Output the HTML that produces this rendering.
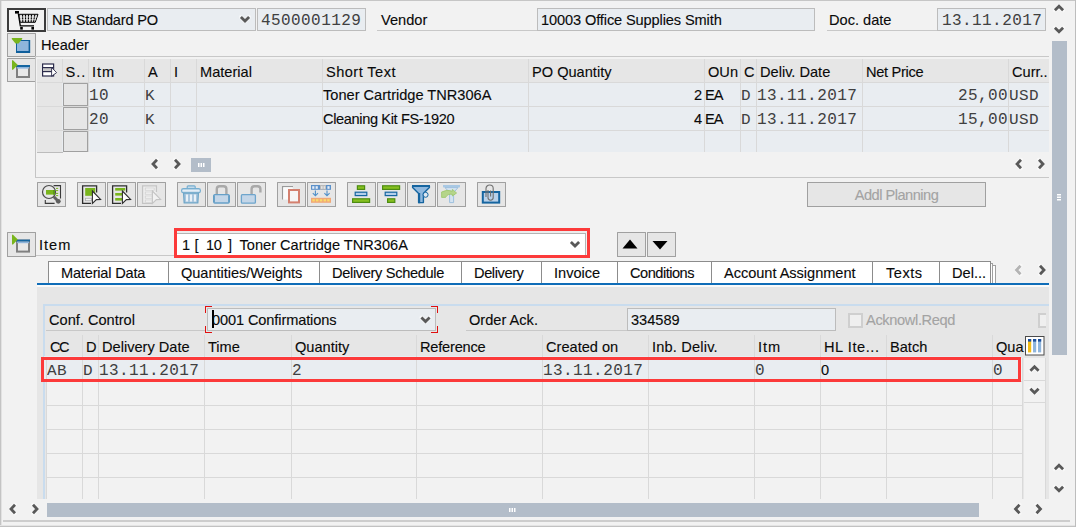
<!DOCTYPE html>
<html><head><meta charset="utf-8">
<style>
*{box-sizing:border-box;margin:0;padding:0}
html,body{width:1076px;height:527px;overflow:hidden;background:#f2f2f2}
body{position:relative;font-family:"Liberation Sans",sans-serif;font-size:14.6px;color:#0a0a0a}
.a{position:absolute}
.t{position:absolute;white-space:nowrap;line-height:18px;height:18px;-webkit-text-stroke:0.12px currentColor}
.m{font-family:"Liberation Mono",monospace;font-size:16px;letter-spacing:0.42px;color:#404040;margin-top:1px;-webkit-text-stroke:0}
.f{position:absolute;background:#e9edf1;border:1px solid #bcbcbc}
.btn{position:absolute;background:#e6e6e6;border:1px solid #a0a0a0;border-radius:0.5px}
.hl{position:absolute;height:1px;background:#d9d9d9}
.vl{position:absolute;width:1px;background:#d9d9d9}
.tb{top:182px;width:29px;height:25px}
.tv{top:262px;height:21px;background:#8c8c8c}
.c{text-align:center}
.lr{left:46px;width:977px}
.lc{top:335px;height:164px}
.ml{transform-origin:0 13.6px;transform:scaleY(0.87)}
svg{position:absolute;overflow:visible}
</style></head><body>

<!-- window edges -->
<div class="a" style="left:0;top:0;width:1076px;height:1px;background:#c6c6c6"></div>
<div class="a" style="left:0;top:0;width:1px;height:527px;background:#c4c4c4"></div><div class="a" style="left:1px;top:1px;width:1px;height:526px;background:#e2e2e2"></div>

<!-- ===== top row ===== -->
<div class="a" id="cart" style="left:7px;top:8px;width:39px;height:24px;border:2px solid #3c3c3c;background:#f2f2f2"></div>
<div class="f" style="left:47px;top:8px;width:209px;height:23px"></div>
<div class="t" style="left:52px;top:11px;letter-spacing:-0.2px">NB Standard PO</div>
<div class="f" style="left:257px;top:8px;width:109px;height:23px"></div>
<div class="t m" style="left:261px;top:11px">4500001129</div>
<div class="t" style="left:381px;top:11px">Vendor</div>
<div class="hl" style="left:377px;top:30px;width:160px;background:#c8c8c8"></div>
<div class="f" style="left:537px;top:8px;width:278px;height:23px"></div>
<div class="t" style="left:541px;top:11px;letter-spacing:-0.12px">10003 Office Supplies Smith</div>
<div class="t" style="left:829px;top:11px">Doc. date</div>
<div class="hl" style="left:827px;top:30px;width:110px;background:#c8c8c8"></div>
<div class="f" style="left:937px;top:8px;width:109px;height:23px"></div>
<div class="t m" style="left:942px;top:11px">13.11.2017</div>

<!-- header row -->
<div class="btn" style="left:7px;top:33px;width:29px;height:24px"></div>
<div class="t" style="left:41px;top:36px">Header</div>
<div class="hl" style="left:35px;top:56px;width:1014px;background:#c8c8c8"></div>

<!-- ===== item overview ===== -->
<div class="btn" style="left:7px;top:58px;width:29px;height:24px"></div>
<div class="vl" style="left:35px;top:56px;height:122px;background:#c4c4c4"></div>
<div class="hl" style="left:35px;top:177px;width:1014px;background:#c8c8c8"></div>

<div class="a" style="left:37px;top:59px;width:1012px;height:93px;background:#e9edf1"></div>
<div class="a" style="left:37px;top:59px;width:1012px;height:23px;background:#e6e6e6"></div>
<div class="a" style="left:37px;top:82px;width:25px;height:70px;background:#e6e6e6"></div>
<!-- row lines -->
<div class="hl" style="left:37px;top:82px;width:1012px"></div>
<div class="hl" style="left:37px;top:106px;width:1012px"></div>
<div class="hl" style="left:37px;top:130px;width:1012px"></div>
<!-- column lines -->
<div class="vl" style="left:62px;top:59px;height:23px"></div>
<div class="vl" style="left:88px;top:59px;height:93px"></div>
<div class="vl" style="left:144px;top:59px;height:93px"></div>
<div class="vl" style="left:170px;top:59px;height:93px"></div>
<div class="vl" style="left:196px;top:59px;height:93px"></div>
<div class="vl" style="left:322px;top:59px;height:93px"></div>
<div class="vl" style="left:528px;top:59px;height:93px"></div>
<div class="vl" style="left:704px;top:59px;height:93px"></div>
<div class="vl" style="left:740px;top:59px;height:93px"></div>
<div class="vl" style="left:756px;top:59px;height:93px"></div>
<div class="vl" style="left:862px;top:59px;height:93px"></div>
<div class="vl" style="left:1008px;top:59px;height:93px"></div>
<!-- row selectors -->
<div class="btn" style="left:63px;top:83px;width:25px;height:23px"></div>
<div class="btn" style="left:63px;top:107px;width:25px;height:23px"></div>
<div class="btn" style="left:63px;top:131px;width:25px;height:21px"></div>
<div class="hl" style="left:37px;top:152px;width:26px;background:#bcbcbc"></div>
<!-- headers -->
<div class="t" style="left:65.5px;top:63px;letter-spacing:1px">S..</div>
<div class="t" style="left:92px;top:63px;letter-spacing:1px">Itm</div>
<div class="t" style="left:148px;top:63px">A</div>
<div class="t" style="left:174px;top:63px">I</div>
<div class="t" style="left:200px;top:63px">Material</div>
<div class="t" style="left:326px;top:63px;letter-spacing:0.45px">Short Text</div>
<div class="t" style="left:532px;top:63px">PO Quantity</div>
<div class="t" style="left:708px;top:63px">OUn</div>
<div class="t" style="left:744px;top:63px">C</div>
<div class="t" style="left:760px;top:63px">Deliv. Date</div>
<div class="t" style="left:866px;top:63px;letter-spacing:-0.3px">Net Price</div>
<div class="t" style="left:1012px;top:63px">Curr..</div>
<!-- row 1 -->
<div class="t m" style="left:89px;top:86px">10</div>
<div class="t m ml" style="left:145px;top:86px">K</div>
<div class="t" style="left:323px;top:86px">Toner Cartridge TNR306A</div>
<div class="t" style="left:600px;top:86px;width:102px;text-align:right">2</div>
<div class="t" style="left:705px;top:86px;letter-spacing:-1px">EA</div>
<div class="t m ml" style="left:741px;top:86px">D</div>
<div class="t m" style="left:757px;top:86px">13.11.2017</div>
<div class="t m" style="left:900px;top:86px;width:108px;text-align:right">25,00</div>
<div class="t m ml" style="left:1009px;top:86px">USD</div>
<!-- row 2 -->
<div class="t m" style="left:89px;top:110px">20</div>
<div class="t m ml" style="left:145px;top:110px">K</div>
<div class="t" style="left:323px;top:110px;letter-spacing:-0.37px">Cleaning Kit FS-1920</div>
<div class="t" style="left:600px;top:110px;width:102px;text-align:right">4</div>
<div class="t" style="left:705px;top:110px;letter-spacing:-1px">EA</div>
<div class="t m ml" style="left:741px;top:110px">D</div>
<div class="t m" style="left:757px;top:110px">13.11.2017</div>
<div class="t m" style="left:900px;top:110px;width:108px;text-align:right">15,00</div>
<div class="t m ml" style="left:1009px;top:110px">USD</div>
<!-- tbl1 scroll -->
<div class="a" style="left:191px;top:158px;width:20px;height:14px;background:#b3bdc9"></div>

<!-- ===== toolbar ===== -->
<div class="btn tb" style="left:37px"></div>
<div class="btn tb" style="left:77px"></div>
<div class="btn tb" style="left:107px"></div>
<div class="btn tb" style="left:137px"></div>
<div class="btn tb" style="left:177px"></div>
<div class="btn tb" style="left:207px"></div>
<div class="btn tb" style="left:237px"></div>
<div class="btn tb" style="left:277px"></div>
<div class="btn tb" style="left:307px"></div>
<div class="btn tb" style="left:347px"></div>
<div class="btn tb" style="left:377px"></div>
<div class="btn tb" style="left:407px"></div>
<div class="btn tb" style="left:437px"></div>
<div class="btn tb" style="left:477px"></div>
<div class="btn" style="left:807px;top:182px;width:179px;height:25px"></div>
<div class="t" style="left:807px;top:186px;width:179px;text-align:center;color:#a3a3a3;letter-spacing:-0.5px">Addl Planning</div>

<!-- ===== item detail ===== -->
<div class="btn" style="left:7px;top:232px;width:29px;height:25px"></div>
<div class="t" style="left:39px;top:236px;letter-spacing:1px">Item</div>
<div class="hl" style="left:36px;top:255px;width:139px;background:#c8c8c8"></div>
<div class="a" style="left:175px;top:233px;width:411px;height:24px;background:#fff;border:1px solid #b4b4b4"></div><div class="a" style="left:177px;top:231px;width:410px;height:2px;background:#ececec"></div>
<div class="a" style="left:174px;top:228px;width:416px;height:30px;border:3px solid #fc3a3a"></div>
<div class="t" style="left:182px;top:236px">1</div>
<div class="t" style="left:194.6px;top:236px">[</div>
<div class="t" style="left:206px;top:236px;letter-spacing:-0.3px">10</div>
<div class="t" style="left:228px;top:236px">]</div>
<div class="t" style="left:239.5px;top:236px">Toner Cartridge TNR306A</div>
<div class="btn" style="left:617px;top:232px;width:29px;height:25px"></div>
<div class="btn" style="left:647px;top:232px;width:29px;height:25px"></div>

<!-- tabs -->
<div class="a" style="left:37px;top:285px;width:1012px;height:214px;background:#e6e6e6"></div>
<div class="a" style="left:37px;top:283px;width:1012px;height:2px;background:#0f6db8"></div>
<div class="a" style="left:37px;top:285px;width:1012px;height:2px;background:#fafafa"></div>
<div class="a" id="tabs" style="left:48px;top:261px;width:943px;height:22px;background:#fff;border:1px solid #8c8c8c;border-bottom:none"></div>
<div class="a" style="left:991px;top:263px;width:2px;height:20px;background:#fff;border:1px solid #a0a0a0;border-left:none;border-bottom:none"></div>
<div class="a" style="left:993px;top:265px;width:3px;height:18px;background:#fff;border:1px solid #a0a0a0;border-left:none;border-bottom:none"></div>
<div class="vl tv" style="left:168px"></div>
<div class="vl tv" style="left:319px"></div>
<div class="vl tv" style="left:461px"></div>
<div class="vl tv" style="left:541px"></div>
<div class="vl tv" style="left:617px"></div>
<div class="vl tv" style="left:711px"></div>
<div class="vl tv" style="left:872px"></div>
<div class="vl tv" style="left:939px"></div>
<div class="t" style="left:61px;top:264px;letter-spacing:-0.2px">Material Data</div>
<div class="t" style="left:181px;top:264px;letter-spacing:-0.05px">Quantities/Weights</div>
<div class="t" style="left:332px;top:264px;letter-spacing:-0.33px">Delivery Schedule</div>
<div class="t" style="left:474px;top:264px;letter-spacing:-0.4px">Delivery</div>
<div class="t" style="left:554px;top:264px">Invoice</div>
<div class="t" style="left:630px;top:264px;letter-spacing:-0.5px">Conditions</div>
<div class="t" style="left:724px;top:264px;letter-spacing:-0.04px">Account Assignment</div>
<div class="t" style="left:886px;top:264px;letter-spacing:0.5px">Texts</div>
<div class="t" style="left:952px;top:264px">Del...</div>

<!-- group box -->
<div class="a" style="left:43px;top:304px;width:1006px;height:195px;border-left:2px solid #c9dcee;border-top:2px solid #c9dcee"></div>
<div class="t" style="left:49px;top:311px">Conf. Control</div>
<div class="hl" style="left:46px;top:330px;width:160px;background:#c8c8c8"></div>
<div class="f" style="left:207px;top:308px;width:229px;height:23px"></div>
<div class="a" style="left:205px;top:306px;width:7px;height:7px;border-left:1.5px solid #e01010;border-top:1.5px solid #e01010"></div>
<div class="a" style="left:205px;top:326px;width:7px;height:7px;border-left:1.5px solid #e01010;border-bottom:1.5px solid #e01010"></div>
<div class="a" style="left:431px;top:306px;width:7px;height:7px;border-right:1.5px solid #e01010;border-top:1.5px solid #e01010"></div>
<div class="a" style="left:431px;top:326px;width:7px;height:7px;border-right:1.5px solid #e01010;border-bottom:1.5px solid #e01010"></div>
<div class="a" style="left:212px;top:310px;width:2px;height:18px;background:#000"></div>
<div class="t" style="left:212px;top:311px;letter-spacing:-0.12px">0001 Confirmations</div>
<div class="t" style="left:469px;top:311px">Order Ack.</div>
<div class="hl" style="left:466px;top:330px;width:161px;background:#c8c8c8"></div>
<div class="f" style="left:627px;top:308px;width:209px;height:23px"></div>
<div class="t" style="left:631px;top:311px">334589</div>
<div class="a" style="left:848px;top:313px;width:15px;height:15px;border:2px solid #cfcfcf;background:#efefef"></div>
<div class="t" style="left:866px;top:311px;color:#a3a3a3;letter-spacing:-0.35px">Acknowl.Reqd</div>
<div class="a" style="left:1038px;top:313px;width:8px;height:15px;border:2px solid #cfcfcf;border-right:none;background:#efefef"></div>

<!-- lower table -->
<div class="a" style="left:46px;top:358px;width:977px;height:141px;background:#f2f2f2"></div>
<div class="a" style="left:1024px;top:358px;width:21px;height:141px;background:#f2f2f2"></div>
<div class="a" style="left:44px;top:356px;width:977px;height:25px;background:#e9edf1"></div>
<div class="hl lr" style="top:381px"></div>
<div class="hl lr" style="top:405px"></div>
<div class="hl lr" style="top:429px"></div>
<div class="hl lr" style="top:453px"></div>
<div class="hl lr" style="top:477px"></div>
<div class="vl lc" style="left:46px;top:358px;height:141px"></div>
<div class="vl lc" style="left:82px"></div>
<div class="vl lc" style="left:98px"></div>
<div class="vl lc" style="left:204px"></div>
<div class="vl lc" style="left:291px"></div>
<div class="vl lc" style="left:416px"></div>
<div class="vl lc" style="left:542px"></div>
<div class="vl lc" style="left:648px"></div>
<div class="vl lc" style="left:754px"></div>
<div class="vl lc" style="left:820px"></div>
<div class="vl lc" style="left:886px"></div>
<div class="vl lc" style="left:992px"></div>
<div class="vl lc" style="left:1022px;top:358px;height:141px"></div>
<div class="t" style="left:50px;top:338px;letter-spacing:-1.5px">CC</div>
<div class="t" style="left:86px;top:338px">D</div>
<div class="t" style="left:102px;top:338px">Delivery Date</div>
<div class="t" style="left:208px;top:338px">Time</div>
<div class="t" style="left:295px;top:338px">Quantity</div>
<div class="t" style="left:420px;top:338px;letter-spacing:-0.2px">Reference</div>
<div class="t" style="left:546px;top:338px">Created on</div>
<div class="t" style="left:652px;top:338px;letter-spacing:0.18px">Inb. Deliv.</div>
<div class="t" style="left:758px;top:338px;letter-spacing:1px">Itm</div>
<div class="t" style="left:824px;top:338px;letter-spacing:0.55px">HL Ite...</div>
<div class="t" style="left:890px;top:338px">Batch</div>
<div class="t" style="left:996px;top:338px">Qua</div>
<div class="t m ml" style="left:47px;top:361px">AB</div>
<div class="t m ml" style="left:83px;top:361px">D</div>
<div class="t m" style="left:99px;top:361px">13.11.2017</div>
<div class="t m" style="left:292px;top:361px">2</div>
<div class="t m" style="left:543px;top:361px">13.11.2017</div>
<div class="t m" style="left:755px;top:361px">0</div>
<div class="t" style="left:821px;top:361px">0</div>
<div class="t m" style="left:993px;top:361px">0</div>
<div class="a" style="left:41px;top:357px;width:980px;height:25px;border:3px solid #fc3a3a"></div>
<!-- col config icon -->
<!-- inner v scroll -->
<div class="hl" style="left:1024px;top:380px;width:21px"></div>
<div class="hl" style="left:1024px;top:402px;width:21px"></div>
<div class="vl" style="left:1045px;top:358px;height:141px"></div>

<!-- bottom scrollbar -->
<div class="a" style="left:47px;top:503px;width:932px;height:14px;background:#b3bdc9"></div>
<div class="a" style="left:3px;top:520px;width:1067px;height:2px;background:#cdcdcd"></div>
<div class="a" style="left:0;top:525px;width:1076px;height:1px;background:#e4e4e4"></div><div class="a" style="left:0;top:526px;width:1076px;height:1px;background:#c2c2c2"></div>

<!-- right scrollbar -->
<div class="a" style="left:1052px;top:41px;width:15px;height:314px;background:#b3bdc9"></div>
<div class="a" style="left:1075px;top:0;width:1px;height:527px;background:#bdbdbd"></div>

<!-- chevrons -->
<svg class="a" style="left:0;top:0" width="1076" height="527" viewBox="0 0 1076 527">
<path d="M240.9,17.0 L245.0,21.0 L249.1,17.0" fill="none" stroke="#fff" stroke-opacity="0.45" stroke-width="4.2" stroke-linejoin="round" stroke-linecap="round"/>
<path d="M240.9,17.0 L245.0,21.0 L249.1,17.0" fill="none" stroke="#595959" stroke-width="2.8" stroke-linejoin="miter" stroke-miterlimit="2"/>
<path d="M570.9,242.0 L575.0,246.0 L579.1,242.0" fill="none" stroke="#fff" stroke-opacity="0.45" stroke-width="4.2" stroke-linejoin="round" stroke-linecap="round"/>
<path d="M570.9,242.0 L575.0,246.0 L579.1,242.0" fill="none" stroke="#595959" stroke-width="2.8" stroke-linejoin="miter" stroke-miterlimit="2"/>
<path d="M421.4,317.5 L425.5,321.5 L429.6,317.5" fill="none" stroke="#fff" stroke-opacity="0.45" stroke-width="4.2" stroke-linejoin="round" stroke-linecap="round"/>
<path d="M421.4,317.5 L425.5,321.5 L429.6,317.5" fill="none" stroke="#595959" stroke-width="2.8" stroke-linejoin="miter" stroke-miterlimit="2"/>
<path d="M1054.9,10.2 L1059.0,6.199999999999999 L1063.1,10.2" fill="none" stroke="#fff" stroke-opacity="0.45" stroke-width="4.2" stroke-linejoin="round" stroke-linecap="round"/>
<path d="M1054.9,10.2 L1059.0,6.199999999999999 L1063.1,10.2" fill="none" stroke="#595959" stroke-width="2.8" stroke-linejoin="miter" stroke-miterlimit="2"/>
<path d="M1054.9,27.8 L1059.0,31.8 L1063.1,27.8" fill="none" stroke="#fff" stroke-opacity="0.45" stroke-width="4.2" stroke-linejoin="round" stroke-linecap="round"/>
<path d="M1054.9,27.8 L1059.0,31.8 L1063.1,27.8" fill="none" stroke="#595959" stroke-width="2.8" stroke-linejoin="miter" stroke-miterlimit="2"/>
<path d="M1054.9,469.2 L1059.0,465.2 L1063.1,469.2" fill="none" stroke="#fff" stroke-opacity="0.45" stroke-width="4.2" stroke-linejoin="round" stroke-linecap="round"/>
<path d="M1054.9,469.2 L1059.0,465.2 L1063.1,469.2" fill="none" stroke="#595959" stroke-width="2.8" stroke-linejoin="miter" stroke-miterlimit="2"/>
<path d="M1054.9,486.8 L1059.0,490.8 L1063.1,486.8" fill="none" stroke="#fff" stroke-opacity="0.45" stroke-width="4.2" stroke-linejoin="round" stroke-linecap="round"/>
<path d="M1054.9,486.8 L1059.0,490.8 L1063.1,486.8" fill="none" stroke="#595959" stroke-width="2.8" stroke-linejoin="miter" stroke-miterlimit="2"/>
<path d="M157.0,159.8 L153.0,164.0 L157.0,168.2" fill="none" stroke="#fff" stroke-opacity="0.45" stroke-width="4.2" stroke-linejoin="round" stroke-linecap="round"/>
<path d="M157.0,159.8 L153.0,164.0 L157.0,168.2" fill="none" stroke="#595959" stroke-width="2.8" stroke-linejoin="miter" stroke-miterlimit="2"/>
<path d="M175.0,159.8 L179.0,164.0 L175.0,168.2" fill="none" stroke="#fff" stroke-opacity="0.45" stroke-width="4.2" stroke-linejoin="round" stroke-linecap="round"/>
<path d="M175.0,159.8 L179.0,164.0 L175.0,168.2" fill="none" stroke="#595959" stroke-width="2.8" stroke-linejoin="miter" stroke-miterlimit="2"/>
<path d="M1021.0,159.8 L1017.0,164.0 L1021.0,168.2" fill="none" stroke="#fff" stroke-opacity="0.45" stroke-width="4.2" stroke-linejoin="round" stroke-linecap="round"/>
<path d="M1021.0,159.8 L1017.0,164.0 L1021.0,168.2" fill="none" stroke="#595959" stroke-width="2.8" stroke-linejoin="miter" stroke-miterlimit="2"/>
<path d="M1039.0,159.8 L1043.0,164.0 L1039.0,168.2" fill="none" stroke="#fff" stroke-opacity="0.45" stroke-width="4.2" stroke-linejoin="round" stroke-linecap="round"/>
<path d="M1039.0,159.8 L1043.0,164.0 L1039.0,168.2" fill="none" stroke="#595959" stroke-width="2.8" stroke-linejoin="miter" stroke-miterlimit="2"/>
<path d="M1020.5,265.8 L1016.5,270.0 L1020.5,274.2" fill="none" stroke="#fff" stroke-opacity="0.45" stroke-width="4.2" stroke-linejoin="round" stroke-linecap="round"/>
<path d="M1020.5,265.8 L1016.5,270.0 L1020.5,274.2" fill="none" stroke="#b4b4b4" stroke-width="2.8" stroke-linejoin="miter" stroke-miterlimit="2"/>
<path d="M1040.0,265.8 L1044.0,270.0 L1040.0,274.2" fill="none" stroke="#fff" stroke-opacity="0.45" stroke-width="4.2" stroke-linejoin="round" stroke-linecap="round"/>
<path d="M1040.0,265.8 L1044.0,270.0 L1040.0,274.2" fill="none" stroke="#595959" stroke-width="2.8" stroke-linejoin="miter" stroke-miterlimit="2"/>
<path d="M1030.4,370.8 L1034.5,366.8 L1038.6,370.8" fill="none" stroke="#fff" stroke-opacity="0.45" stroke-width="4.2" stroke-linejoin="round" stroke-linecap="round"/>
<path d="M1030.4,370.8 L1034.5,366.8 L1038.6,370.8" fill="none" stroke="#595959" stroke-width="2.8" stroke-linejoin="miter" stroke-miterlimit="2"/>
<path d="M1030.4,388.8 L1034.5,392.8 L1038.6,388.8" fill="none" stroke="#fff" stroke-opacity="0.45" stroke-width="4.2" stroke-linejoin="round" stroke-linecap="round"/>
<path d="M1030.4,388.8 L1034.5,392.8 L1038.6,388.8" fill="none" stroke="#595959" stroke-width="2.8" stroke-linejoin="miter" stroke-miterlimit="2"/>
<path d="M15.0,504.8 L11.0,509.0 L15.0,513.2" fill="none" stroke="#fff" stroke-opacity="0.45" stroke-width="4.2" stroke-linejoin="round" stroke-linecap="round"/>
<path d="M15.0,504.8 L11.0,509.0 L15.0,513.2" fill="none" stroke="#595959" stroke-width="2.8" stroke-linejoin="miter" stroke-miterlimit="2"/>
<path d="M33.0,504.8 L37.0,509.0 L33.0,513.2" fill="none" stroke="#fff" stroke-opacity="0.45" stroke-width="4.2" stroke-linejoin="round" stroke-linecap="round"/>
<path d="M33.0,504.8 L37.0,509.0 L33.0,513.2" fill="none" stroke="#595959" stroke-width="2.8" stroke-linejoin="miter" stroke-miterlimit="2"/>
<path d="M1019.5,504.8 L1015.5,509.0 L1019.5,513.2" fill="none" stroke="#fff" stroke-opacity="0.45" stroke-width="4.2" stroke-linejoin="round" stroke-linecap="round"/>
<path d="M1019.5,504.8 L1015.5,509.0 L1019.5,513.2" fill="none" stroke="#595959" stroke-width="2.8" stroke-linejoin="miter" stroke-miterlimit="2"/>
<path d="M1036.5,504.8 L1040.5,509.0 L1036.5,513.2" fill="none" stroke="#fff" stroke-opacity="0.45" stroke-width="4.2" stroke-linejoin="round" stroke-linecap="round"/>
<path d="M1036.5,504.8 L1040.5,509.0 L1036.5,513.2" fill="none" stroke="#595959" stroke-width="2.8" stroke-linejoin="miter" stroke-miterlimit="2"/>
<path d="M622.5,248.5 L630,239.5 L637.5,248.5 Z" fill="#000"/>
<path d="M652.5,241 L667.5,241 L660,249.5 Z" fill="#000"/>
<g fill="#fff"><rect x="198" y="163" width="1.5" height="4"/><rect x="200.5" y="163" width="1.5" height="4"/><rect x="203" y="163" width="1.5" height="4"/></g>
<g fill="#fff"><rect x="509" y="508" width="1.5" height="4"/><rect x="511.5" y="508" width="1.5" height="4"/><rect x="514" y="508" width="1.5" height="4"/></g>
<g fill="#fff"><rect x="1057" y="194" width="4" height="1.5"/><rect x="1057" y="196.5" width="4" height="1.5"/><rect x="1057" y="199" width="4" height="1.5"/></g>
</svg>
<!-- icons -->
<svg class="a" style="left:0;top:0" width="1076" height="527" viewBox="0 0 1076 527">
<!-- cart -->
<g id="cart-ic">
<rect x="15" y="11" width="4" height="2.6" fill="#000"/>
<path d="M18.3,13.5 L20.3,25.8 L34,25.8" fill="none" stroke="#000" stroke-width="1.3"/>
<path d="M19,14.3 L38,14.3 L35.2,22.3 L20.2,22.3 Z" fill="#d8d8d8" stroke="#000" stroke-width="1"/>
<g stroke="#000" stroke-width="1.1">
<line x1="22.5" y1="14.5" x2="22.8" y2="22"/><line x1="25.5" y1="14.5" x2="25.6" y2="22"/><line x1="28.5" y1="14.5" x2="28.4" y2="22"/><line x1="31.5" y1="14.5" x2="31.2" y2="22"/><line x1="34.8" y1="14.5" x2="33.6" y2="22"/>
</g>
<g stroke="#fff" stroke-width="0.8" opacity="0.75"><line x1="19.5" y1="17" x2="37" y2="17"/><line x1="20" y1="19.7" x2="36" y2="19.7"/></g>
<rect x="20.2" y="27" width="2.6" height="2.6" fill="#000"/>
<rect x="31.4" y="27" width="2.6" height="2.6" fill="#000"/>
</g>
<!-- header collapse icon -->
<g>
<rect x="16.5" y="40.5" width="13" height="12" fill="#8fb5dc" stroke="#0f5f9c" stroke-width="1"/>
<rect x="16" y="51" width="14" height="2" fill="#0f5f9c"/>
<rect x="28.6" y="40" width="1.6" height="13" fill="#0f5f9c"/>
<path d="M11.8,38 L22.2,38 L22.2,39 L18.5,43.6 L15.5,43.6 L11.8,39 Z" fill="#79b51c"/>
</g>
<!-- item overview expand icon -->
<g>
<rect x="17" y="66" width="12" height="11" fill="#e8e8e8" stroke="#808080" stroke-width="2"/>
<rect x="16" y="65" width="14" height="2" fill="#1565a0"/>
<rect x="17" y="67" width="12" height="1.6" fill="#8fb5dc"/>
<path d="M12,60.2 L13,60.2 L17.8,65 L13,69.8 L12,69.8 Z" fill="#79b51c"/>
</g>
<!-- item detail expand icon -->
<g transform="translate(0,174.6)">
<rect x="17" y="66" width="12" height="11" fill="#e8e8e8" stroke="#808080" stroke-width="2"/>
<rect x="16" y="65" width="14" height="2" fill="#1565a0"/>
<rect x="17" y="67" width="12" height="1.6" fill="#8fb5dc"/>
<path d="M12,60.2 L13,60.2 L17.8,65 L13,69.8 L12,69.8 Z" fill="#79b51c"/>
</g>
<!-- table config icon -->
<g>
<rect x="42.6" y="64" width="11" height="12" fill="#fff" stroke="#2b2b4b" stroke-width="1.2"/>
<rect x="43.2" y="68" width="10" height="3" fill="#c8c8c8"/>
<line x1="42.6" y1="67.6" x2="53.6" y2="67.6" stroke="#2b2b4b" stroke-width="1.2"/>
<line x1="42.6" y1="71.6" x2="53.6" y2="71.6" stroke="#2b2b4b" stroke-width="1.2"/>
<path d="M51.6,67.5 L51.6,76.3 L56.6,72.6 Z" fill="#fff" stroke="#2b2b4b" stroke-width="0.9"/>
</g>

<!-- tb1: detail / magnifier -->
<g>
<path d="M53.6,185.6 L60.5,185.6 L60.5,198.4 M54.6,203.4 L45.3,203.4 L45.3,200" fill="none" stroke="#3a3a3a" stroke-width="1.1"/>
<circle cx="49" cy="192" r="6.5" fill="#e8e8e8" stroke="#4a4a4a" stroke-width="1.2"/>
<rect x="46" y="190" width="9" height="4.6" fill="#79b51c"/>
<rect x="53" y="190" width="2" height="4.6" fill="#5e9a18"/>
<g stroke="#79b51c" stroke-width="1"><line x1="56" y1="188.4" x2="58.2" y2="188.4"/><line x1="56" y1="190.6" x2="58.2" y2="190.6"/><line x1="56" y1="193.4" x2="58.2" y2="193.4"/><line x1="56" y1="195.6" x2="58.2" y2="195.6"/></g>
<line x1="53.8" y1="196.8" x2="58" y2="201" stroke="#606060" stroke-width="3"/>
<circle cx="58.3" cy="201.3" r="2.4" fill="#606060"/>
</g>
<!-- tb2 -->
<g id="pg2">
<path d="M96.6,192.6 L96.6,185.8 L82.6,185.8 L82.6,203.4 L91,203.4" fill="none" stroke="#2e2e2e" stroke-width="1.3"/>
<rect x="85.2" y="188" width="10" height="7.8" fill="#79b51c"/>
<rect x="85.5" y="198.3" width="6" height="2.4" fill="#f4f4f4" stroke="#b0b0b0" stroke-width="0.8"/>
<path d="M92.4,191 L100.6,199.4 L96.4,199.6 L92.4,203.4 Z" fill="#fff" stroke="#2e2e2e" stroke-width="1.1" stroke-linejoin="miter"/>
</g>
<!-- tb3 -->
<g>
<path d="M126.6,192.6 L126.6,185.8 L112.6,185.8 L112.6,203.4 L121,203.4" fill="none" stroke="#2e2e2e" stroke-width="1.3"/>
<rect x="115.2" y="188" width="10" height="2.6" fill="#79b51c"/>
<rect x="115.2" y="193" width="7" height="2.6" fill="#79b51c"/>
<rect x="115.2" y="198" width="7" height="2.6" fill="#79b51c"/>
<path d="M122.4,191 L130.6,199.4 L126.4,199.6 L122.4,203.4 Z" fill="#fff" stroke="#2e2e2e" stroke-width="1.1" stroke-linejoin="miter"/>
</g>
<!-- tb4 disabled -->
<g>
<path d="M156.4,192 L156.4,185.8 L142.6,185.8 L142.6,203.4 L152,203.4" fill="#f0f0f0" stroke="#c4c4c4" stroke-width="1.3"/>
<g fill="#f4f4f4" stroke="#cfcfcf" stroke-width="0.8"><rect x="145.2" y="188" width="9" height="2.2"/><rect x="145.2" y="192" width="7" height="2.2"/><rect x="145.2" y="196" width="7" height="2.2"/><rect x="145.2" y="200" width="7" height="2.2"/></g>
<path d="M152.4,191 L160.6,199.4 L156.4,199.6 L152.4,203.4 Z" fill="#f2f2f2" stroke="#c4c4c4" stroke-width="1.1"/>
</g>
<!-- tb5 trash -->
<g>
<rect x="187.2" y="185.8" width="8" height="3" rx="1" fill="#c4daea" stroke="#76aed0" stroke-width="1.2"/>
<rect x="181.6" y="188.6" width="18.8" height="4.2" rx="1.8" fill="#c9dcec" stroke="#76aed0" stroke-width="1.2"/>
<line x1="182.6" y1="190.7" x2="199.4" y2="190.7" stroke="#eef4f9" stroke-width="0.9"/>
<path d="M183.6,193.2 L198.4,193.2 L197.8,202.8 L184.2,202.8 Z" fill="#a9c6de" stroke="#6ea6c8" stroke-width="1.3"/>
<g stroke="#fff" stroke-width="1.5"><line x1="187" y1="194.4" x2="187" y2="201.4"/><line x1="191" y1="194.4" x2="191" y2="201.4"/><line x1="195" y1="194.4" x2="195" y2="201.4"/></g>
</g>
<!-- tb6 lock -->
<g>
<path d="M216.8,194 L216.8,189 Q216.8,186.2 219.6,186.2 L223.6,186.2 Q226.4,186.2 226.4,189 L226.4,194" fill="none" stroke="#a9a9a9" stroke-width="2.4"/>
<rect x="213.8" y="194.6" width="15.4" height="8.4" rx="1" fill="#c4d6e8" stroke="#66a0c8" stroke-width="1.3"/><rect x="213.2" y="195.4" width="1.6" height="6.8" fill="#5f9cc4"/><rect x="228.2" y="195.4" width="1.6" height="6.8" fill="#5f9cc4"/>
</g>
<!-- tb7 unlock -->
<g>
<path d="M251.6,194 L251.6,189 Q251.6,186.2 254.4,186.2 L257.6,186.2 Q260.4,186.2 260.4,189 L260.4,192.4" fill="none" stroke="#a9a9a9" stroke-width="2.4"/>
<rect x="241.4" y="194.6" width="14" height="8.6" rx="1" fill="#c4d6e8" stroke="#6ea5cc" stroke-width="1.3"/>
</g>
<!-- tb8 copy -->
<g>
<path d="M282.6,199.4 L282.6,186.6 L293,186.6" fill="none" stroke="#9a9a9a" stroke-width="1.3"/>
<rect x="283.2" y="187.2" width="9.6" height="12.4" fill="#fafafa"/>
<rect x="289" y="190" width="10" height="12.4" fill="#f6f6f6" stroke="#d4806f" stroke-width="2"/>
</g>
<!-- tb9 -->
<g>
<rect x="311" y="185" width="20" height="4.8" fill="#5b90c9"/>
<rect x="320" y="185" width="6" height="4.8" fill="#b9b9b9"/>
<g fill="#e6eef8"><rect x="312.2" y="186.2" width="2.2" height="2.6"/><rect x="315.6" y="186.2" width="2.2" height="2.6"/><rect x="327.4" y="186.2" width="2.2" height="2.6"/></g>
<g fill="#e4e4e4"><rect x="321" y="186.2" width="1.6" height="2.6"/><rect x="323.6" y="186.2" width="1.6" height="2.6"/></g>
<g stroke="#4f8fc8" stroke-width="1.1" fill="none"><path d="M315.4,190.6 L315.4,195.6 M312.8,193.2 L315.4,195.8 L318,193.2"/><path d="M327,190.6 L327,195.6 M324.4,193.2 L327,195.8 L329.6,193.2"/></g>
<rect x="311" y="197.8" width="20" height="5" fill="#f0a878"/>
<g fill="#fadc68"><rect x="312.4" y="199.2" width="2.4" height="2.2"/><rect x="316" y="199.2" width="2.4" height="2.2"/><rect x="319.8" y="199.2" width="2.4" height="2.2"/><rect x="323.6" y="199.2" width="2.4" height="2.2"/><rect x="327.2" y="199.2" width="2.4" height="2.2"/></g>
</g>
<!-- tb10 sort asc -->
<g stroke-width="1.2">
<rect x="357.4" y="185.8" width="7.2" height="3.6" fill="#86c020" stroke="#4d8c12"/>
<rect x="355.2" y="192.2" width="11.6" height="3.4" fill="#b3cfea" stroke="#1565a0"/>
<rect x="352.6" y="198.8" width="17" height="3.6" fill="#86c020" stroke="#4d8c12"/>
</g>
<!-- tb11 sort desc -->
<g stroke-width="1.2">
<rect x="382.6" y="185.8" width="17" height="3.6" fill="#86c020" stroke="#4d8c12"/>
<rect x="385.2" y="192.2" width="11.6" height="3.4" fill="#b3cfea" stroke="#1565a0"/>
<rect x="387.6" y="198.8" width="7.2" height="3.6" fill="#86c020" stroke="#4d8c12"/>
</g>
<!-- tb12 filter -->
<g>
<path d="M412.6,186 L429.4,186 L429.4,187.6 L423.4,193.6 L423.4,202.6 L418.6,202.6 L418.6,193.6 L412.6,187.6 Z" fill="#8fb8de" stroke="#1565a0" stroke-width="1.4" stroke-linejoin="round"/>
<rect x="412" y="185" width="18" height="2" fill="#1565a0"/>
<rect x="418" y="193" width="2.2" height="10.2" fill="#1565a0"/>
<circle cx="425.6" cy="194.8" r="2.5" fill="#dfe8f2" stroke="#1565a0" stroke-width="1"/>
</g>
<!-- tb13 filter delete (disabled) -->
<g>
<rect x="443" y="185" width="17" height="2.4" fill="#a8c8e4"/>
<path d="M445,187.6 L458,187.6 L453.6,192.6 L453.6,202.6 L449.6,202.6 L449.6,192.6 Z" fill="#d4e3f1" stroke="#9dc0de" stroke-width="1"/>
<path d="M441.6,197.4 L441.6,192 Q447,189 452.4,191.2 L452.4,189.4 L456.6,193 L452.4,196 L452.4,194.4 Q447.6,193.4 445.6,197.4 Z" fill="#b5d58a" stroke="#9cc56a" stroke-width="0.8"/>
</g>
<!-- tb14 attachment -->
<g>
<rect x="482.8" y="192" width="16.4" height="10.6" fill="#b9d1ea" stroke="#1565a0" stroke-width="2"/>
<path d="M490.6,190.4 L490.6,196.6 M486,197 L486,188.4 A3.6,3.4 0 0 1 493.2,188.4 L493.2,197.6 A2.6,2.6 0 0 1 488,197.6 L488,190" fill="none" stroke="#707070" stroke-width="1.1"/>
</g>
<!-- column config icon -->
<g>
<rect x="1025.5" y="336.5" width="18.5" height="18.5" fill="#fff" stroke="#4a4a4a" stroke-width="1"/>
<rect x="1028" y="339" width="3.2" height="13.4" fill="#f5bd14"/><rect x="1028" y="339" width="3.2" height="2.6" fill="#1c4f9c"/>
<rect x="1033" y="339" width="3.2" height="13.4" fill="#8fb5dc"/><rect x="1033" y="339" width="3.2" height="2.6" fill="#1c4f9c"/>
<rect x="1038" y="339" width="3.2" height="13.4" fill="#8fb5dc"/><rect x="1038" y="339" width="3.2" height="2.6" fill="#1c4f9c"/>
</g>
</svg>
<!-- /icons -->
</body></html>
